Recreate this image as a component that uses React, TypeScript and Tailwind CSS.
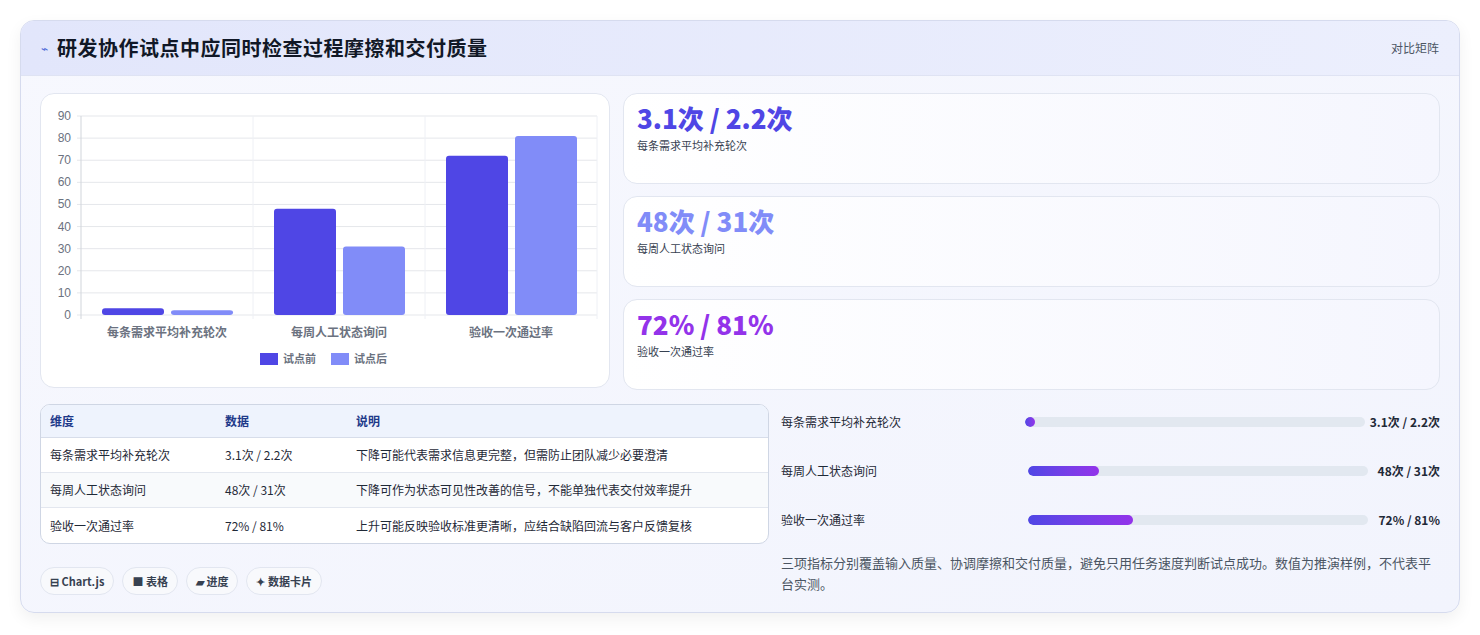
const F = { fontFamily: '"Noto Sans CJK SC","Noto Sans",sans-serif' };

function Chart() {
  const x0 = 40, y0 = 221, h = 199, cw = 172;
  const sc = h / 90;
  const data = [[3.1, 2.2], [48, 31], [72, 81]];
  const labels = ["每条需求平均补充轮次", "每周人工状态询问", "验收一次通过率"];
  return (
    <svg width="568" height="294" className="block">
      {Array.from({ length: 10 }).map((_, i) => {
        const y = y0 - i * 10 * sc;
        return (
          <g key={i}>
            <line x1={x0 - 4} x2={556} y1={y} y2={y} stroke="#e5e7eb" />
            <text x={x0 - 10} y={y + 4} textAnchor="end" fontSize="12" fill="#6b7280" fontFamily="Liberation Sans">{i * 10}</text>
          </g>
        );
      })}
      {[0, 1, 2, 3].map(i => (
        <line key={i} x1={x0 + i * cw} x2={x0 + i * cw} y1={y0 - h} y2={y0 + 4} stroke={i === 0 ? "#d1d5db" : "#eef0f5"} />
      ))}
      {data.map((d, i) => (
        <g key={i}>
          <rect x={x0 + i * cw + 21} y={y0 - d[0] * sc} width={62} height={d[0] * sc} rx="3" fill="#4f46e5" />
          <rect x={x0 + i * cw + 90} y={y0 - d[1] * sc} width={62} height={d[1] * sc} rx="3" fill="#818cf8" />
          <text x={x0 + i * cw + cw / 2} y={y0 + 22} textAnchor="middle" fontSize="12" fontWeight="600" fill="#6b7280" style={F}>{labels[i]}</text>
        </g>
      ))}
      <rect x="219" y="259" width="18" height="12" fill="#4f46e5" />
      <text x="242" y="269" fontSize="11" fontWeight="600" fill="#6b7280" style={F}>试点前</text>
      <rect x="290" y="259" width="18" height="12" fill="#818cf8" />
      <text x="313" y="269" fontSize="11" fontWeight="600" fill="#6b7280" style={F}>试点后</text>
    </svg>
  );
}

export default function App() {
  const stats = [
    ["3.1次 / 2.2次", "每条需求平均补充轮次", "text-[#4f46e5]"],
    ["48次 / 31次", "每周人工状态询问", "text-[#818cf8]"],
    ["72% / 81%", "验收一次通过率", "text-[#9333ea]"],
  ];
  const rows = [
    ["每条需求平均补充轮次", "3.1次 / 2.2次", "下降可能代表需求信息更完整，但需防止团队减少必要澄清"],
    ["每周人工状态询问", "48次 / 31次", "下降可作为状态可见性改善的信号，不能单独代表交付效率提升"],
    ["验收一次通过率", "72% / 81%", "上升可能反映验收标准更清晰，应结合缺陷回流与客户反馈复核"],
  ];
  const bars: [string, number, string, string][] = [
    ["每条需求平均补充轮次", 2, "3.1次 / 2.2次", "ml-[-3px]"],
    ["每周人工状态询问", 21, "48次 / 31次", ""],
    ["验收一次通过率", 31, "72% / 81%", ""],
  ];
  return (
    <div style={F} className="w-[1480px] h-[635px] bg-white pt-[20px] px-[20px]">
      <div className="w-[1440px] h-[593px] rounded-[14px] border border-[#d6dbee] bg-gradient-to-br from-[#f7f8fe] to-[#f2f4fd] overflow-hidden shadow-[0_6px_16px_rgba(0,0,0,0.06)]">
        <div className="h-[55px] flex items-center justify-between px-[20px] bg-gradient-to-r from-[#e2e6fb] to-[#eceffd] border-b border-[#dfe3f3]">
          <div className="flex items-center gap-[9px]">
            <span className="text-[#4f6bd8] text-[12px]">⌁</span>
            <span className="text-[20px] tracking-[0.5px] font-bold text-[#111827]">研发协作试点中应同时检查过程摩擦和交付质量</span>
          </div>
          <span className="text-[12px] text-[#4b5563]">对比矩阵</span>
        </div>
        <div className="px-[19px] pt-[17px]">
          <div className="flex gap-[13px]">
            <div className="w-[570px] h-[295px] bg-white rounded-[14px] border border-[#e2e6f0]">
              <Chart />
            </div>
            <div className="flex-1 flex flex-col gap-[12px]">
              {stats.map(s => (
                <div key={s[0]} className="h-[91px] rounded-[14px] border border-[#e2e6f0] bg-gradient-to-r from-white to-[#f5f6fe] px-[13px] pt-[6px]">
                  <div className={`text-[26px] font-extrabold leading-[36px] ${s[2]}`}>{s[0]}</div>
                  <div className="text-[11px] text-[#374151] mt-[1px]">{s[1]}</div>
                </div>
              ))}
            </div>
          </div>
          <div className="flex gap-[12px] mt-[14px]">
            <div className="w-[729px]">
              <div className="rounded-[10px] border border-[#cfd6e4] overflow-hidden bg-white text-[12px]">
                <div className="flex h-[33px] items-center bg-[#eef3fd] border-b border-[#d7ddea] font-semibold text-[#1e3a8a]">
                  <div className="w-[184px] pl-[9px]">维度</div><div className="w-[131px]">数据</div><div>说明</div>
                </div>
                {rows.map((r, i) => (
                  <div key={i} className={`flex h-[35px] items-center text-[#1f2937] ${i < 2 ? "border-b border-[#e3e7ef]" : ""} ${i === 1 ? "bg-[#f8fafc]" : ""}`}>
                    <div className="w-[184px] pl-[9px]">{r[0]}</div><div className="w-[131px]">{r[1]}</div><div>{r[2]}</div>
                  </div>
                ))}
              </div>
              <div className="flex gap-[8px] mt-[23px] text-[11px] font-semibold text-[#374151]">
                {["⊟ Chart.js", "■ 表格", "▰ 进度", "✦ 数据卡片"].map(t => (
                  <span key={t} className="h-[28px] px-[9px] flex items-center rounded-full border border-[#e2e6f0] bg-[#f8f9fc]">{t}</span>
                ))}
              </div>
            </div>
            <div className="flex-1 text-[12px] -mt-[7px]">
              {bars.map(b => (
                <div key={b[0]} className="h-[49px] flex items-center pt-[1px]">
                  <div className="w-[247px] text-[#1f2937]">{b[0]}</div>
                  <div className={`w-[340px] h-[10px] rounded-full bg-[#e2e8f0] overflow-hidden ${b[3]}`}>
                    <div className="h-full rounded-full bg-gradient-to-r from-[#4f46e5] to-[#9333ea]" style={{ width: `${b[1]}%`, minWidth: 10 }} />
                  </div>
                  <div className="flex-1 text-right font-bold text-[#1f2937]">{b[2]}</div>
                </div>
              ))}
              <p className="mt-[8px] text-[13px] leading-[21px] text-[#4b5563]">三项指标分别覆盖输入质量、协调摩擦和交付质量，避免只用任务速度判断试点成功。数值为推演样例，不代表平台实测。</p>
            </div>
          </div>
        </div>
      </div>
    </div>
  );
}
